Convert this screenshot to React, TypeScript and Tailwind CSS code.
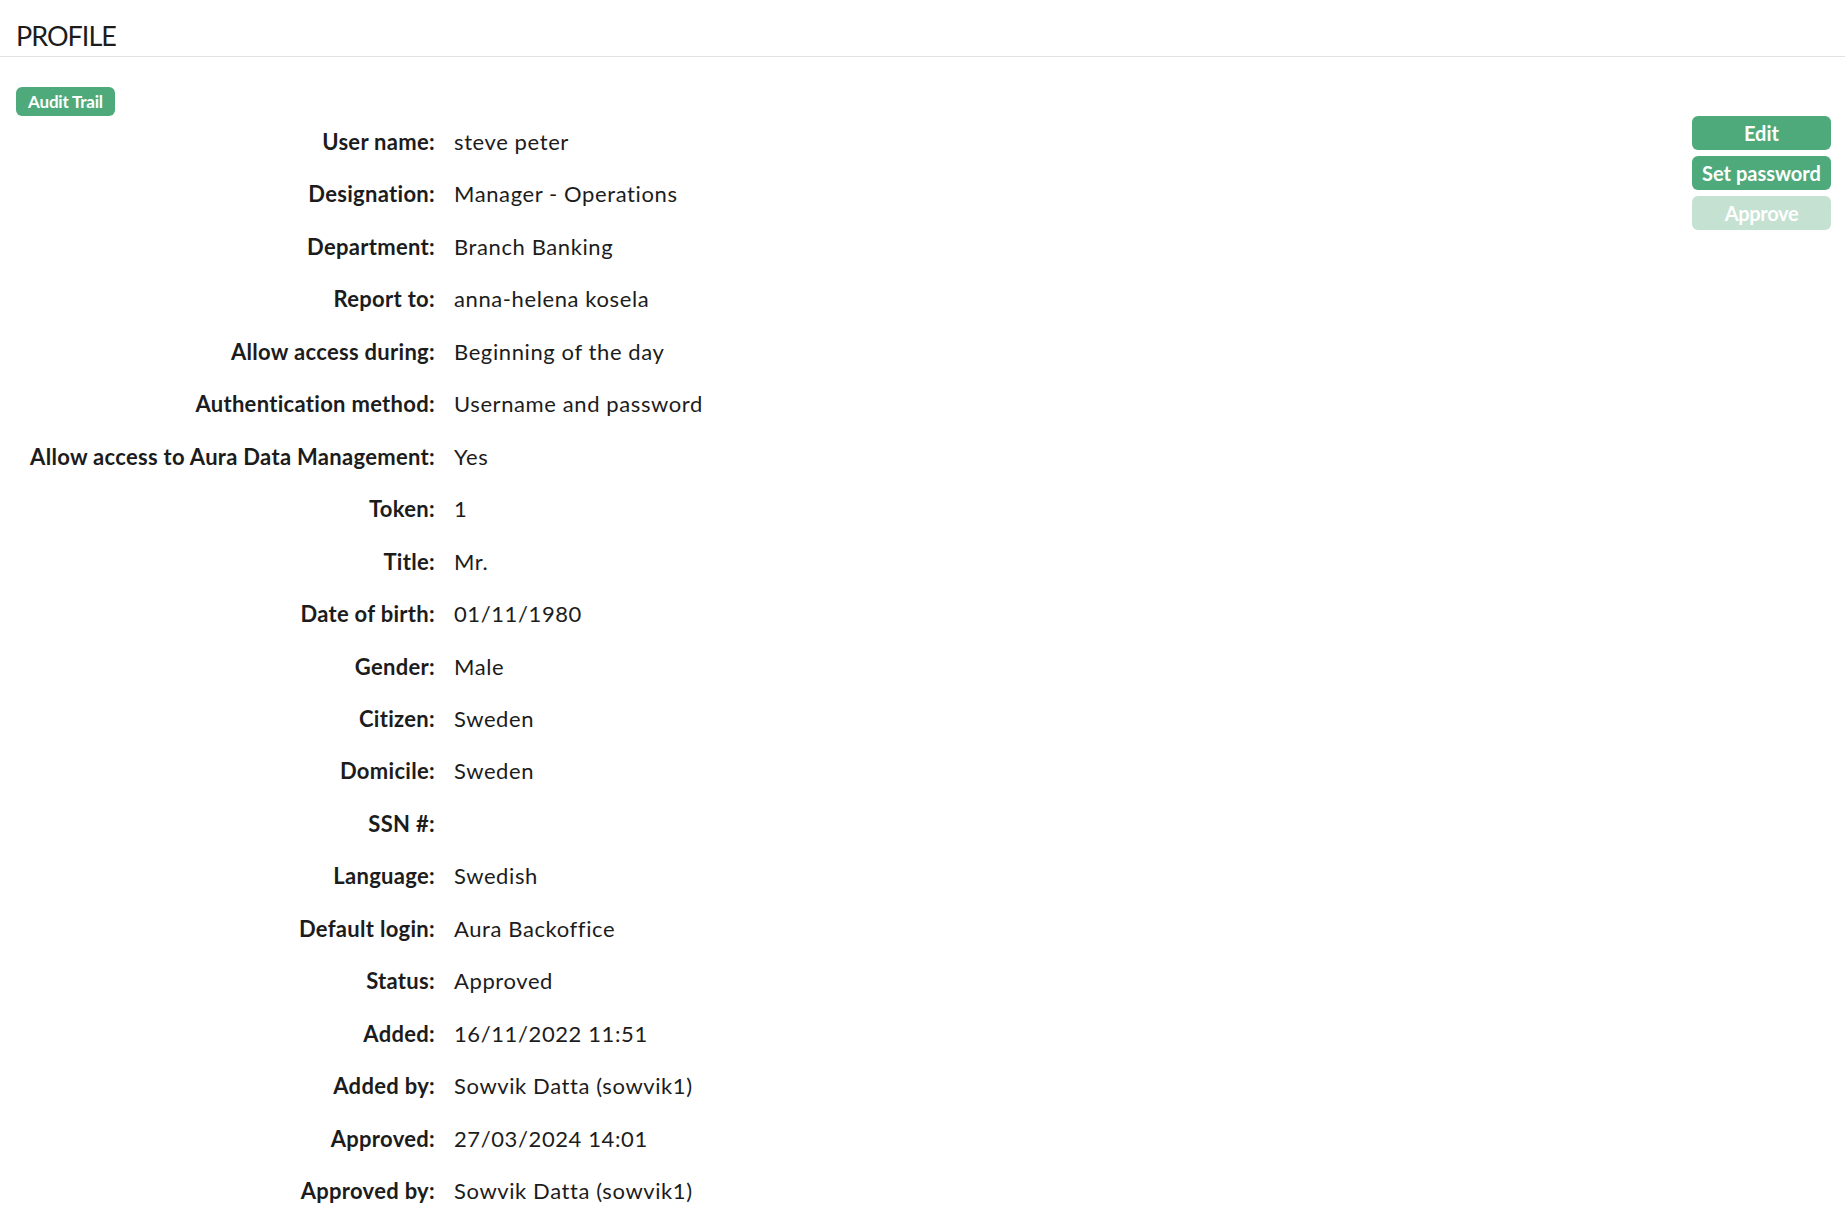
import React from "react";

const rows: [string, string][] = [
  ["User name:", "steve peter"],
  ["Designation:", "Manager - Operations"],
  ["Department:", "Branch Banking"],
  ["Report to:", "anna-helena kosela"],
  ["Allow access during:", "Beginning of the day"],
  ["Authentication method:", "Username and password"],
  ["Allow access to Aura Data Management:", "Yes"],
  ["Token:", "1"],
  ["Title:", "Mr."],
  ["Date of birth:", "01/11/1980"],
  ["Gender:", "Male"],
  ["Citizen:", "Sweden"],
  ["Domicile:", "Sweden"],
  ["SSN #:", ""],
  ["Language:", "Swedish"],
  ["Default login:", "Aura Backoffice"],
  ["Status:", "Approved"],
  ["Added:", "16/11/2022 11:51"],
  ["Added by:", "Sowvik Datta (sowvik1)"],
  ["Approved:", "27/03/2024 14:01"],
  ["Approved by:", "Sowvik Datta (sowvik1)"],
];

export default function App() {
  return (
    <div className="min-h-[1229px] w-full bg-white text-[#1c1c1c] [font-family:Lato,'Noto_Sans',sans-serif]">
      <div className="h-[57px] border-b border-[#e2e2e2] pl-4 pt-[20px]">
        <h1 className="text-[27px] leading-[32px] font-normal tracking-[-1px]">PROFILE</h1>
      </div>
      <div className="flex justify-between pl-4 pr-[14px] pt-[30px]">
        <div className="flex flex-col items-start">
          <button className="flex h-[29px] w-[99px] items-center justify-center rounded-[6px] bg-[#4eaa7a] text-[17px] font-bold tracking-[-0.2px] text-white">
            Audit Trail
          </button>
          <div className="grid grid-cols-[419px_auto] gap-x-[19px]">
            {rows.map(([k, v]) => (
              <React.Fragment key={k}>
                <div className="text-right text-[22px] leading-[52.45px] font-bold tracking-[0.3px] whitespace-nowrap">{k}</div>
                <div className="text-[22px] leading-[52.45px] font-normal tracking-[0.6px] whitespace-nowrap">{v}</div>
              </React.Fragment>
            ))}
          </div>
        </div>
        <div className="mt-[29px] flex w-[139px] flex-col gap-[6px]">
          <button className="flex h-[34px] w-full items-center justify-center rounded-[6px] bg-[#4eaa7a] text-[20px] font-bold tracking-[0px] text-white">
            Edit
          </button>
          <button className="flex h-[34px] w-full items-center justify-center rounded-[6px] bg-[#4eaa7a] text-[20px] font-bold tracking-[0px] text-white">
            Set password
          </button>
          <button className="flex h-[34px] w-full items-center justify-center rounded-[6px] bg-[#c4e1d2] text-[20px] font-bold tracking-[-0.3px] text-white">
            Approve
          </button>
        </div>
      </div>
    </div>
  );
}
